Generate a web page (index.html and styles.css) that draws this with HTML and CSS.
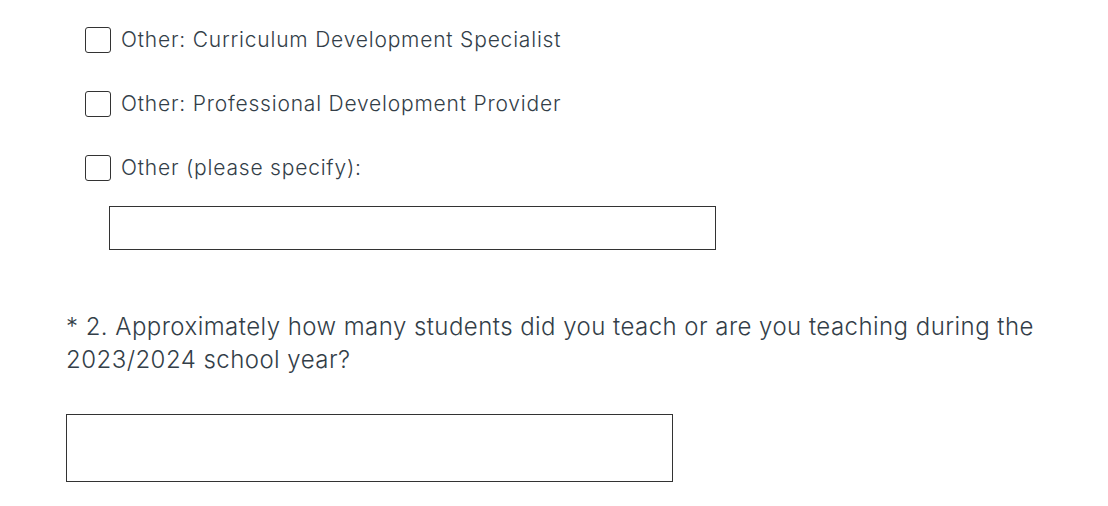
FILE: index.html
```html
<!DOCTYPE html>
<html>
<head>
    <meta charset="UTF-8">
    <link rel="stylesheet" href="styles.css">
</head>
<body>
    <div class="survey">
        <div class="answers">
            <label class="choice">
                <input type="checkbox">
                <span class="box"></span>
                <span class="choice-text">Other: Curriculum Development Specialist</span>
            </label>
            <label class="choice">
                <input type="checkbox">
                <span class="box"></span>
                <span class="choice-text">Other: Professional Development Provider</span>
            </label>
            <label class="choice">
                <input type="checkbox">
                <span class="box"></span>
                <span class="choice-text">Other (please specify):</span>
            </label>
            <input type="text" class="other-input">
        </div>

        <div class="question">
            <h2 class="question-title">* 2. Approximately how many students did you teach or are you teaching during the 2023/2024 school year?</h2>
            <input type="text" class="answer-input">
        </div>
    </div>
</body>
</html>
```
FILE: styles.css
```css
body {
    margin: 0;
    background: #fff;
    font-family: 'Inter', 'Open Sans', sans-serif;
    color: #333e48;
}

.survey {
    width: 990px;
    padding: 22px 0 0 66px;
}

.answers {
    padding-left: 19px;
}

.choice {
    display: flex;
    align-items: center;
    height: 36px;
    margin-bottom: 28px;
    cursor: pointer;
}

.choice input {
    position: absolute;
    opacity: 0;
    width: 0;
    height: 0;
}

.box {
    width: 24px;
    height: 24px;
    border: 1px solid #333;
    border-radius: 3px;
    flex-shrink: 0;
    margin-right: 10px;
}

.choice-text {
    font-size: 21px;
    font-weight: 300;
    line-height: 36px;
    letter-spacing: 0.8px;
}

.other-input {
    display: block;
    box-sizing: border-box;
    width: 607px;
    height: 44px;
    margin: -8px 0 0 24px;
    border: 1px solid #333;
    border-radius: 0;
    padding: 0 10px;
    font: inherit;
}

.question {
    margin-top: 60px;
}

.question-title {
    margin: 0;
    font-size: 24px;
    font-weight: 300;
    line-height: 33px;
    letter-spacing: 0.45px;
}

.answer-input {
    display: block;
    box-sizing: border-box;
    width: 607px;
    height: 68px;
    margin-top: 38px;
    border: 1px solid #333;
    border-radius: 0;
    padding: 0 10px;
    font: inherit;
}
```
